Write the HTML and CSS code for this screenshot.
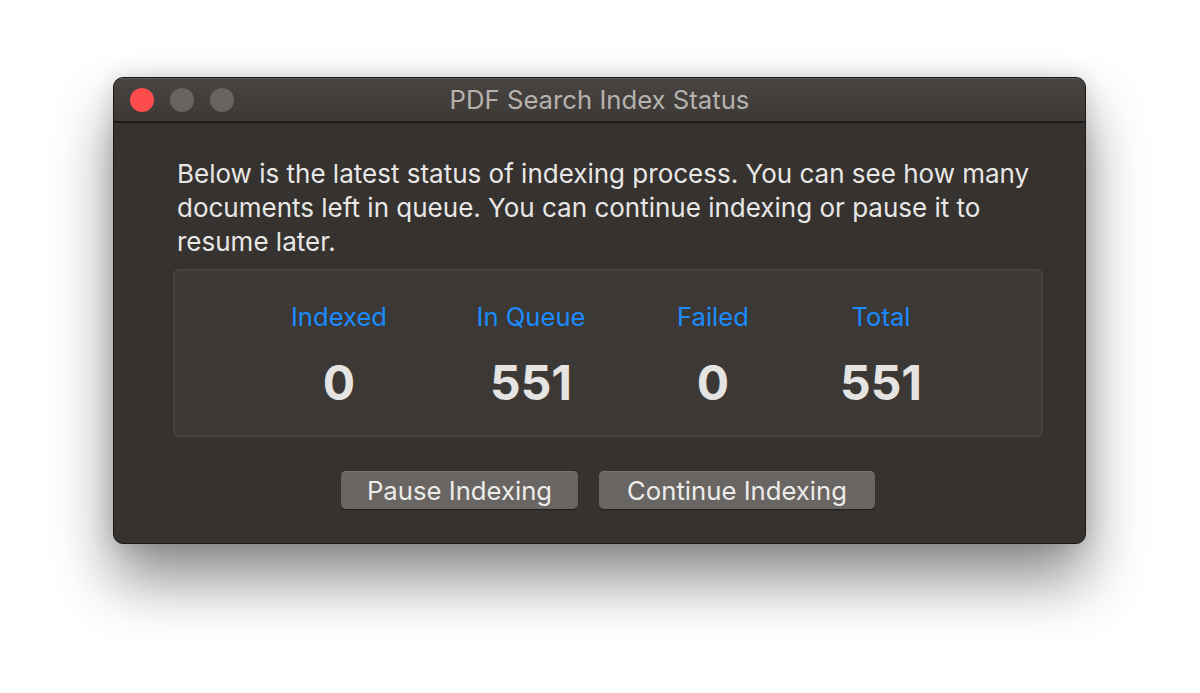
FILE: index.html
```html
<!DOCTYPE html>
<html lang="en">
<head>
  <meta charset="UTF-8" />
  <title>PDF Search Index Status</title>
  <link rel="stylesheet" href="styles.css">
</head>
<body>
  <div class="window">
    <div class="titlebar">
      <div class="lights">
        <span class="light close"></span>
        <span class="light"></span>
        <span class="light"></span>
      </div>
      <div class="title">PDF Search Index Status</div>
    </div>

    <div class="content">
      <p class="intro">Below is the latest status of indexing process. You can see how many documents left in queue. You can continue indexing or pause it to resume later.</p>

      <div class="stats">
        <div class="stat">
          <div class="label">Indexed</div>
          <div class="value">0</div>
        </div>
        <div class="stat">
          <div class="label">In Queue</div>
          <div class="value">551</div>
        </div>
        <div class="stat">
          <div class="label">Failed</div>
          <div class="value">0</div>
        </div>
        <div class="stat">
          <div class="label">Total</div>
          <div class="value">551</div>
        </div>
      </div>

      <div class="actions">
        <button class="btn btn-pause">Pause Indexing</button>
        <button class="btn btn-continue">Continue Indexing</button>
      </div>
    </div>
  </div>
</body>
</html>
```

FILE: styles.css
```css
html, body {
  margin: 0;
  padding: 0;
  height: 100%;
  background-color: #fff;
  font-family: Inter, 'Noto Sans', sans-serif;
}

body {
  padding: 77px 0 0 113px;
  box-sizing: border-box;
}

.window {
  width: 973px;
  height: 467px;
  box-sizing: border-box;
  background: #353230;
  border: 1px solid #1c1a19;
  border-radius: 10px;
  overflow: hidden;
  box-shadow: 0 36px 60px rgba(0, 0, 0, 0.45), 0 0 22px rgba(0, 0, 0, 0.15);
}

.titlebar {
  position: relative;
  height: 43px;
  background: linear-gradient(#484441, #3c3936);
  border-bottom: 2px solid #1e1c1b;
  box-shadow: inset 0 1px 0 #5a5653;
  display: flex;
  align-items: center;
  justify-content: center;
}

.lights {
  position: absolute;
  left: 16px;
  top: 10px;
  display: flex;
  gap: 16px;
}

.light {
  width: 24px;
  height: 24px;
  border-radius: 50%;
  background: #68645f;
}

.light.close {
  background: #fc4c4c;
}

.title {
  color: #b6b2ae;
  font-size: 25.7px;
}

.content {
  padding: 0 42px 0 63px;
}

.intro {
  margin: 34px 0 10px;
  color: #e9e7e5;
  font-size: 26px;
  line-height: 34px;
}

.stats {
  display: grid;
  grid-template-columns: 192px 192px 172px 164px;
  padding: 32px 0 24px 68px;
  margin-left: -4px;
  background: #3b3835;
  border: 2px solid #47443f;
  border-radius: 6px;
  text-align: center;
}

.label {
  color: #1a8cff;
  font-size: 25.6px;
  line-height: 28px;
}

.value {
  margin-top: 24px;
  color: #e6e4e2;
  font-size: 48px;
  font-weight: 700;
  line-height: 56px;
}

.actions {
  display: flex;
  justify-content: center;
  gap: 21px;
  margin-top: 34px;
  padding-right: 4px;
}

.btn {
  height: 38px;
  padding: 0 26px;
  background: #696562;
  color: #ececea;
  border: none;
  border-radius: 5px;
  box-shadow: 0 1px 1px rgba(0, 0, 0, 0.4), inset 0 1px 0 #757170;
  font-family: inherit;
  font-size: 25.7px;
}

.btn-continue {
  padding: 0 28px;
}
```
